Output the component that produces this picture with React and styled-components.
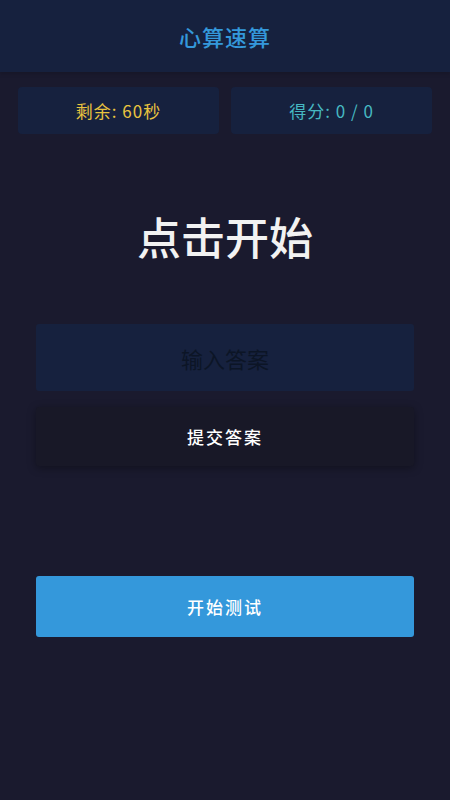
import React from "react";
import styled, { createGlobalStyle } from "styled-components";

const Global = createGlobalStyle`
  html, body { margin: 0; padding: 0; background: #1a1a2e; }
  body { font-family: "Noto Sans CJK SC", "Noto Sans", sans-serif; min-height: 800px; }
  * { box-sizing: border-box; }
`;

const Page = styled.div`
  width: 450px;
  min-height: 800px;
  background: #1a1a2e;
  display: flex;
  flex-direction: column;
`;

const Header = styled.header`
  height: 72px;
  background: #16213e;
  display: flex;
  align-items: center;
  justify-content: center;
  box-shadow: 0 2px 4px rgba(0, 0, 0, 0.15);
`;

const Title = styled.h1`
  margin: 0;
  font-size: 22px;
  font-weight: 500;
  color: #3498db;
  letter-spacing: 1px;
`;

const Stats = styled.div`
  display: grid;
  grid-template-columns: 1fr 1fr;
  gap: 12px;
  padding: 15px 18px 0;
`;

const StatBox = styled.div`
  height: 47px;
  background: #16213e;
  border-radius: 4px;
  display: flex;
  align-items: center;
  justify-content: center;
  font-size: 17px;
  letter-spacing: 1px;
  color: ${(p) => p.$color};
`;

const Main = styled.main`
  display: flex;
  flex-direction: column;
  padding: 0 36px;
`;

const Question = styled.div`
  margin-top: 76px;
  height: 53px;
  line-height: 53px;
  text-align: center;
  font-size: 44px;
  font-weight: 500;
  color: #f2f2f2;
`;

const AnswerInput = styled.input`
  margin-top: 61px;
  height: 67px;
  width: 100%;
  border: none;
  outline: none;
  border-radius: 3px;
  background: #16213e;
  color: #ffffff;
  text-align: center;
  font-family: inherit;
  font-size: 22px;
  &::placeholder {
    color: #0c1526;
  }
`;

const Button = styled.button`
  width: 100%;
  height: ${(p) => p.$h}px;
  margin-top: ${(p) => p.$mt}px;
  border: none;
  border-radius: 3px;
  background: ${(p) => p.$bg};
  color: #ffffff;
  font-family: inherit;
  font-size: 17px;
  font-weight: 500;
  letter-spacing: 2px;
  box-shadow: ${(p) => (p.$shadow ? "0 2px 8px rgba(0,0,0,0.35)" : "none")};
  cursor: pointer;
`;

export default function App() {
  return (
    <Page>
      <Global />
      <Header>
        <Title>心算速算</Title>
      </Header>
      <Stats>
        <StatBox $color="#e9c43f">剩余: 60秒</StatBox>
        <StatBox $color="#46b8c2">得分: 0 / 0</StatBox>
      </Stats>
      <Main>
        <Question>点击开始</Question>
        <AnswerInput placeholder="输入答案" />
        <Button $h={59} $mt={16} $bg="#181827" $shadow>
          提交答案
        </Button>
        <Button $h={61} $mt={110} $bg="#3498db">
          开始测试
        </Button>
      </Main>
    </Page>
  );
}
